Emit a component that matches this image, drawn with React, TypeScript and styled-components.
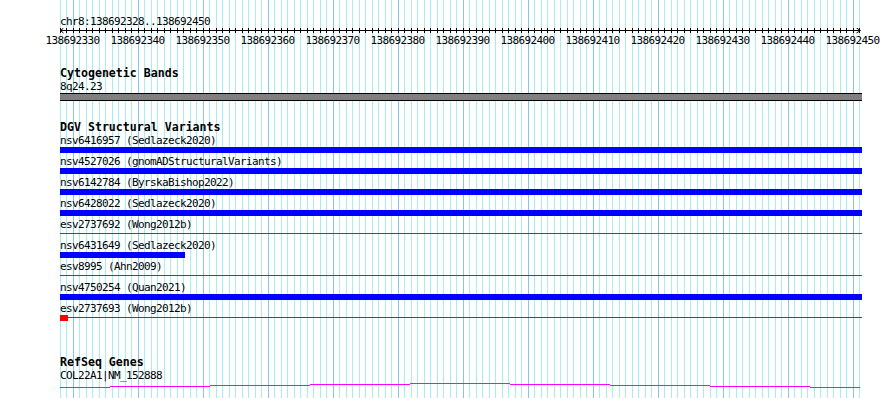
import React from "react";
import styled, { createGlobalStyle } from "styled-components";

const START = 138692328;
const BASES = 124;
const LEFT = 60;
const PX_PER_BASE = 6.5;
const TRACK_WIDTH = 802;

const baseX = (i: number) => LEFT + Math.floor(PX_PER_BASE * i) + 0.5;

type Feature = {
	name: string;
	kind: "bar" | "line";
	width?: number;
	block?: number;
};

const variants: Array<Feature> = [
	{ name: "nsv6416957 (Sedlazeck2020)", kind: "bar", width: TRACK_WIDTH },
	{ name: "nsv4527026 (gnomADStructuralVariants)", kind: "bar", width: TRACK_WIDTH },
	{ name: "nsv6142784 (ByrskaBishop2022)", kind: "bar", width: TRACK_WIDTH },
	{ name: "nsv6428022 (Sedlazeck2020)", kind: "bar", width: TRACK_WIDTH },
	{ name: "esv2737692 (Wong2012b)", kind: "line" },
	{ name: "nsv6431649 (Sedlazeck2020)", kind: "bar", width: 125 },
	{ name: "esv8995 (Ahn2009)", kind: "line" },
	{ name: "nsv4750254 (Quan2021)", kind: "bar", width: TRACK_WIDTH },
	{ name: "esv2737693 (Wong2012b)", kind: "line", block: 8 },
];

// gene model drawn as a shallow arc of 100px segments
const geneSegments = [
	{ x1: 0, x2: 50, y: 5 },
	{ x1: 50, x2: 150, y: 4 },
	{ x1: 150, x2: 250, y: 3 },
	{ x1: 250, x2: 350, y: 2 },
	{ x1: 350, x2: 450, y: 1 },
	{ x1: 450, x2: 550, y: 2 },
	{ x1: 550, x2: 650, y: 3 },
	{ x1: 650, x2: 750, y: 4 },
	{ x1: 750, x2: 800, y: 5 },
];

const GlobalStyle = createGlobalStyle`
	html, body {
		margin: 0;
		padding: 0;
		background: #ffffff;
	}
`;

const Panel = styled.div`
	position: relative;
	width: 890px;
	height: 398px;
	overflow: hidden;
	background: #ffffff;
	font-family: "DejaVu Sans Mono", "Liberation Mono", monospace;
	font-size: 11px;
	letter-spacing: -0.62px;
	color: #000000;
`;

const GridLayer = styled.svg`
	position: absolute;
	left: 0;
	top: 0;
	z-index: 0;
	pointer-events: none;
`;

const Content = styled.div`
	position: relative;
	z-index: 1;
	display: flex;
	flex-direction: column;
`;

const RulerTitle = styled.div`
	margin-top: 15px;
	padding-left: ${LEFT}px;
	height: 13px;
	line-height: 13px;
	white-space: pre;
`;

const RulerSvg = styled.svg`
	display: block;
	font-family: "DejaVu Sans Mono", "Liberation Mono", monospace;
	font-size: 11px;
	letter-spacing: -0.62px;
`;

const TrackTitle = styled.div<{ $gap: number }>`
	margin-top: ${({ $gap }) => $gap}px;
	padding-left: ${LEFT}px;
	height: 11px;
	line-height: 11px;
	font-weight: bold;
	font-size: 11.6px;
	letter-spacing: 0;
	white-space: pre;
`;

const Label = styled.div<{ $gap?: number }>`
	margin-top: ${({ $gap }) => $gap ?? 0}px;
	padding-left: ${LEFT}px;
	height: 11px;
	line-height: 11px;
	white-space: pre;
`;

const Band = styled.div`
	margin: 1px 0 0 ${LEFT}px;
	width: ${TRACK_WIDTH}px;
	height: 6px;
	background: #808080;
	border-top: 1px solid #000000;
	border-bottom: 1px solid #000000;
`;

const FeatureList = styled.div`
	margin-top: 2px;
	display: flex;
	flex-direction: column;
`;

const FeatureRow = styled.div`
	display: flex;
	flex-direction: column;
	height: 21px;
`;

const FeatureBar = styled.div<{ $width: number }>`
	margin: 1px 0 0 ${LEFT}px;
	width: ${({ $width }) => $width}px;
	height: 6px;
	background: #0000ff;
`;

const FeatureLine = styled.div`
	margin: 1px 0 0 ${LEFT}px;
	width: ${TRACK_WIDTH}px;
	height: 6px;
	display: flex;
	background: linear-gradient(
		to bottom,
		transparent 2px,
		#ff0000 2px,
		#ff0000 3px,
		transparent 3px
	);
`;

const FeatureBlock = styled.div<{ $width: number }>`
	width: ${({ $width }) => $width}px;
	height: 6px;
	background: #ff0000;
`;

const GeneSvg = styled.svg`
	display: block;
	margin: 1px 0 0 ${LEFT}px;
`;

const Grid = () => {
	const lines = [];
	for (let i = 0; i < BASES; i++) {
		const major = (START + i) % 10 === 0;
		lines.push(
			<line
				key={i}
				x1={baseX(i)}
				x2={baseX(i)}
				y1={0}
				y2={398}
				stroke={major ? "#86c6ea" : "#a6eef0"}
				strokeWidth={1}
			/>
		);
	}
	return (
		<GridLayer width={890} height={398}>
			{lines}
		</GridLayer>
	);
};

const Ruler = () => {
	const ticks = [];
	const labels = [];
	for (let i = 0; i < BASES; i++) {
		const x = baseX(i);
		ticks.push(<line key={i} x1={x} x2={x} y1={0} y2={5} stroke="#000" />);
		if ((START + i) % 10 === 0) {
			labels.push(
				<text key={i} x={x - 1} y={16} textAnchor="middle" fill="#000">
					{START + i}
				</text>
			);
		}
	}
	const end = baseX(BASES - 1);
	return (
		<RulerSvg width={890} height={20}>
			<line x1={LEFT} x2={end} y1={2.5} y2={2.5} stroke="#000" />
			<polyline
				points={`${LEFT + 3.5},0 ${LEFT + 0.5},2.5 ${LEFT + 3.5},5`}
				fill="none"
				stroke="#000"
			/>
			<polyline
				points={`${end - 3},0 ${end + 1},2.5 ${end - 3},5`}
				fill="none"
				stroke="#000"
			/>
			{ticks}
			{labels}
		</RulerSvg>
	);
};

const App = () => {
	return (
		<Panel>
			<GlobalStyle />
			<Grid />
			<Content>
				<RulerTitle>chr8:138692328..138692450</RulerTitle>
				<Ruler />

				<TrackTitle $gap={20}>Cytogenetic Bands</TrackTitle>
				<Label $gap={2}>8q24.23</Label>
				<Band />

				<TrackTitle $gap={21}>DGV Structural Variants</TrackTitle>
				<FeatureList>
					{variants.map((v, idx) => (
						<FeatureRow key={idx}>
							<Label>{v.name}</Label>
							{v.kind === "bar" ? (
								<FeatureBar $width={v.width ?? TRACK_WIDTH} />
							) : (
								<FeatureLine>
									{v.block ? <FeatureBlock $width={v.block} /> : null}
								</FeatureLine>
							)}
						</FeatureRow>
					))}
				</FeatureList>

				<TrackTitle $gap={33}>RefSeq Genes</TrackTitle>
				<Label $gap={2}>COL22A1|NM_152888</Label>
				<GeneSvg width={TRACK_WIDTH} height={7}>
					{geneSegments.map((s, idx) => (
						<line
							key={idx}
							x1={s.x1}
							x2={s.x2}
							y1={s.y + 0.5}
							y2={s.y + 0.5}
							stroke="#ff00ff"
						/>
					))}
				</GeneSvg>
			</Content>
		</Panel>
	);
};

export default App;
